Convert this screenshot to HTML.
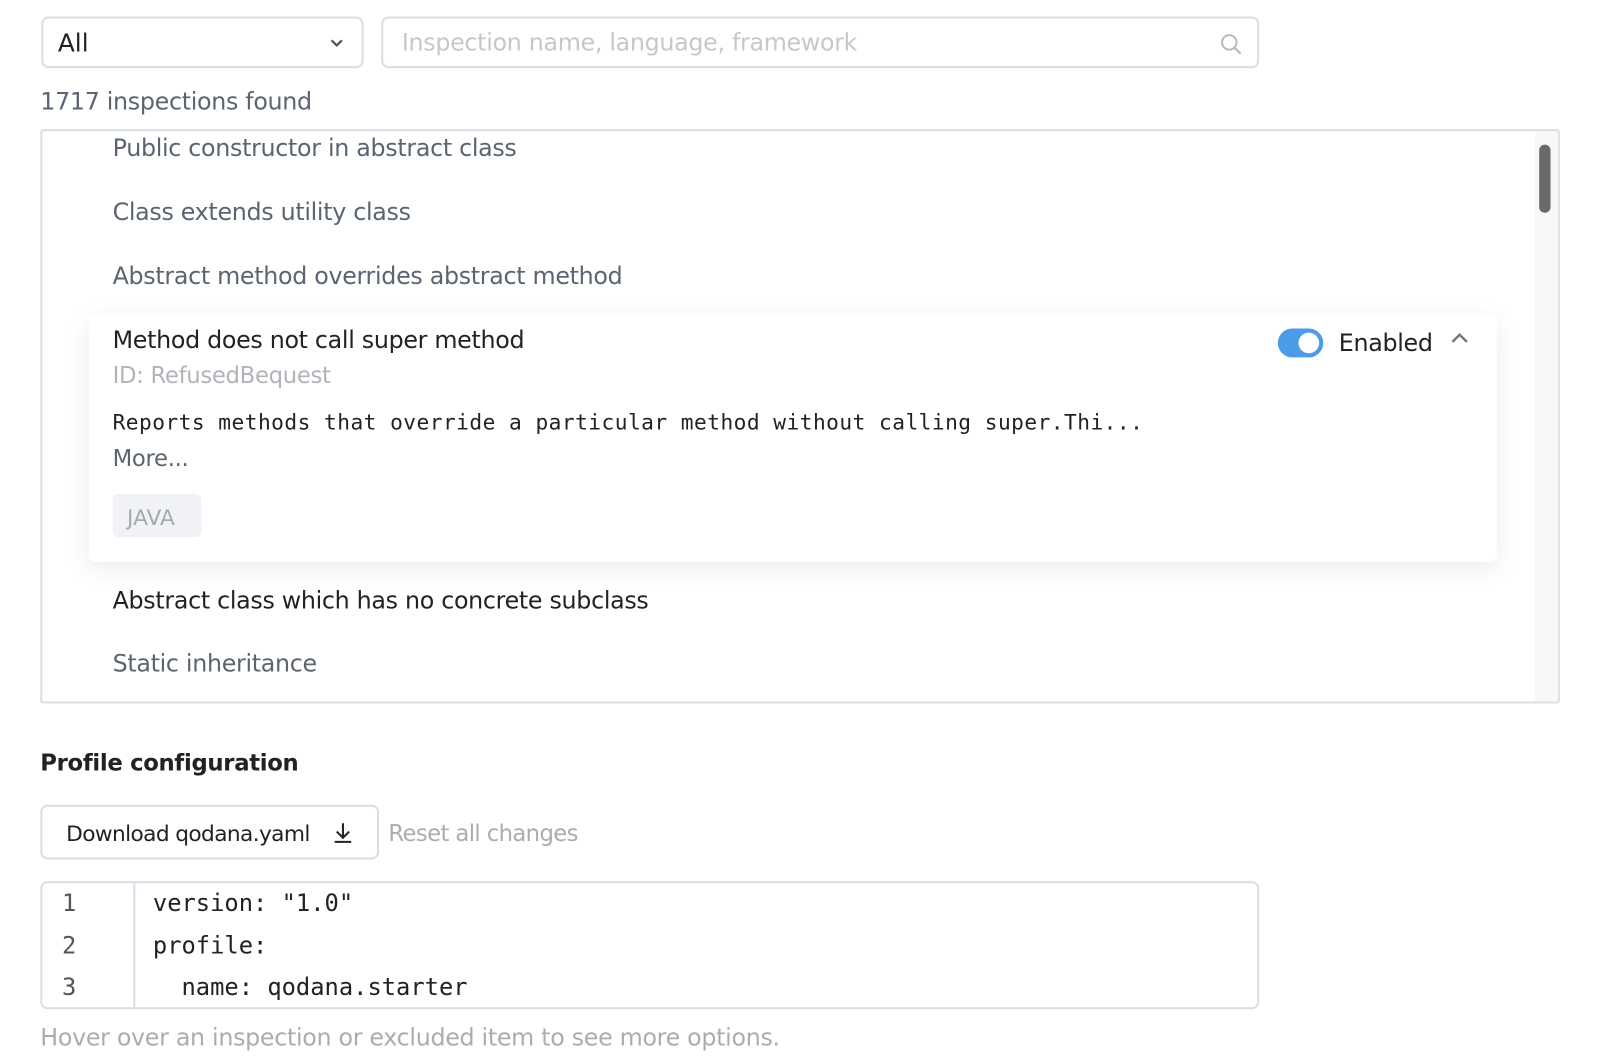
<!DOCTYPE html>
<html><head><meta charset="utf-8"><style>
html,body{margin:0;padding:0;background:#fff;width:1620px;height:1063px;overflow:hidden}
#w{position:absolute;left:0;top:0;width:1568px;height:1030px;transform:scale(1.033);transform-origin:0 0;font-family:"DejaVu Sans","Liberation Sans",sans-serif;}
.a{position:absolute;white-space:nowrap}
.box{position:absolute;border:2px solid #d9dfe7;border-radius:7px;box-sizing:border-box;background:#fff}
.t{font-size:23px;color:#5b6470;letter-spacing:-0.3px}
.mono{font-family:"DejaVu Sans Mono","Liberation Mono",monospace}
</style></head><body><div id="w">
<div class="box" style="left:40px;top:16px;width:312px;height:50px"></div>
<div class="a" style="left:56px;top:28px;font-size:24px;color:#222">All</div>
<svg class="a" style="left:318px;top:37px" width="16" height="10"><path d="M3 2 L8 7 L13 2" stroke="#555" stroke-width="2.2" fill="none"/></svg>
<div class="box" style="left:369px;top:16px;width:850px;height:50px"></div>
<div class="a t" style="left:389px;top:29px;color:#c4c8cd">Inspection name, language, framework</div>
<svg class="a" style="left:1180px;top:31px" width="24" height="24"><circle cx="10" cy="10" r="7" stroke="#bbb" stroke-width="2" fill="none"/><path d="M15 15 L21 21" stroke="#bbb" stroke-width="2.2"/></svg>
<div class="a t" style="left:39px;top:86px">1717 inspections found</div>
<div class="box" style="left:39px;top:125px;width:1471px;height:556px;border-radius:3px"></div>
<div class="a" style="left:1486px;top:127px;width:22px;height:552px;background:#f8f8f8"></div>
<div class="a" style="left:1490px;top:140px;width:11px;height:66px;background:#6a6a6a;border-radius:6px"></div>
<div class="a t" style="left:109px;top:131px">Public constructor in abstract class</div>
<div class="a t" style="left:109px;top:193px">Class extends utility class</div>
<div class="a t" style="left:109px;top:255px">Abstract method overrides abstract method</div>
<div class="a" style="left:86px;top:305px;width:1363px;height:239px;background:#fff;border-radius:6px;box-shadow:0 6px 24px rgba(0,0,0,0.08)"></div>
<div class="a t" style="left:109px;top:317px;color:#222">Method does not call super method</div>
<div class="a t" style="left:109px;top:352px;color:#b0b4b9;font-size:22px">ID: RefusedBequest</div>
<div class="a mono" style="left:109px;top:397px;font-size:20.5px;color:#222;letter-spacing:0.45px">Reports methods that override a particular method without calling super.Thi...</div>
<div class="a t" style="left:109px;top:432px;font-size:22px">More...</div>
<div class="a" style="left:109px;top:478px;width:86px;height:42px;background:#f0f2f5;border-radius:6px"></div>
<div class="a" style="left:123px;top:489px;font-size:21px;color:#a5aab0">JAVA</div>
<div class="a" style="left:1237px;top:318px;width:44px;height:28px;background:#4b9be6;border-radius:14px"></div>
<div class="a" style="left:1257px;top:322px;width:20px;height:20px;background:#fff;border-radius:50%"></div>
<div class="a t" style="left:1296px;top:320px;color:#222">Enabled</div>
<svg class="a" style="left:1403px;top:320px" width="20" height="14"><path d="M3 11 L10 4 L17 11" stroke="#777" stroke-width="2.4" fill="none"/></svg>
<div class="a t" style="left:109px;top:569px;color:#222">Abstract class which has no concrete subclass</div>
<div class="a t" style="left:109px;top:630px">Static inheritance</div>
<div class="a" style="left:39px;top:727px;font-size:22px;font-weight:bold;color:#222;letter-spacing:-0.3px">Profile configuration</div>
<div class="box" style="left:39px;top:779px;width:328px;height:53px"></div>
<div class="a t" style="left:64px;top:795px;color:#222;font-size:21px;letter-spacing:-0.6px">Download qodana.yaml</div>
<svg class="a" style="left:321px;top:795px" width="22" height="22"><path d="M11 2 V15 M5 10 L11 16 L17 10 M3 20 H19" stroke="#222" stroke-width="2" fill="none"/></svg>
<div class="a t" style="left:376px;top:795px;color:#a9adb2;font-size:22px;letter-spacing:-0.6px">Reset all changes</div>
<div class="box" style="left:39px;top:853px;width:1180px;height:124px"></div>
<div class="a" style="left:129px;top:855px;width:2px;height:120px;background:#d9dfe7"></div>
<div class="a mono" style="left:60px;top:855px;font-size:23px;color:#555;line-height:40.5px">1<br>2<br>3</div>
<div class="a mono" style="left:148px;top:855px;font-size:23px;color:#222;line-height:40.5px;white-space:pre">version: "1.0"
profile:
  name: qodana.starter</div>
<div class="a t" style="left:39px;top:992px;color:#a9adb2">Hover over an inspection or excluded item to see more options.</div>
</div></body></html>
